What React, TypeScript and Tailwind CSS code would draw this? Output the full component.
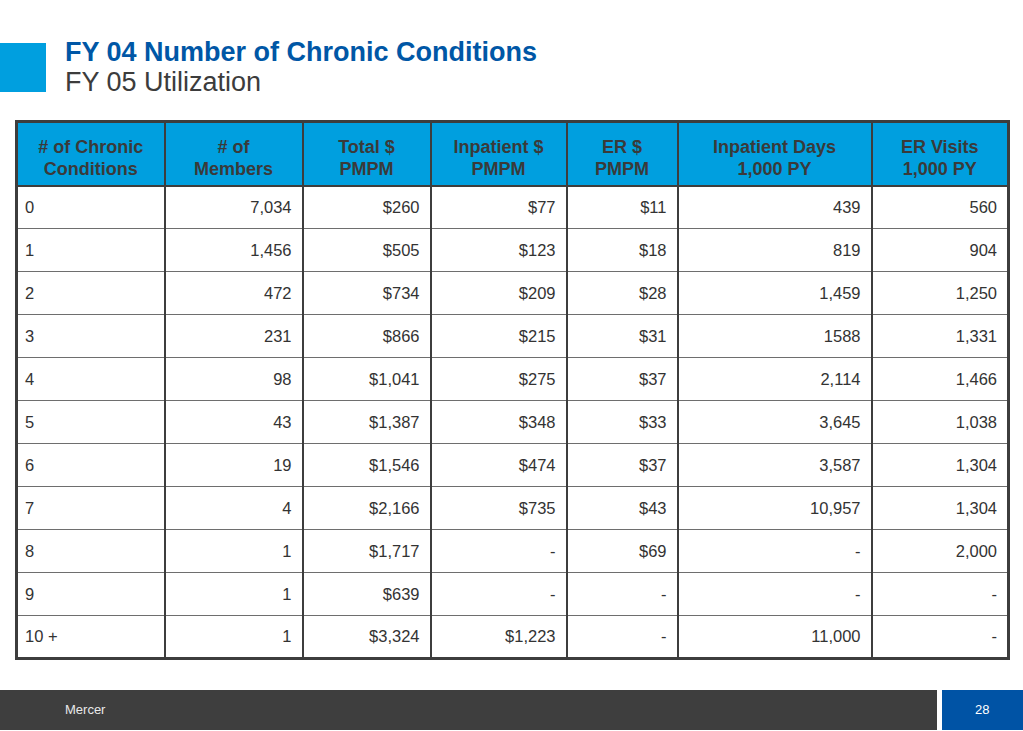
import React from 'react';

const headers = [
  ['# of Chronic', 'Conditions'],
  ['# of', 'Members'],
  ['Total $', 'PMPM'],
  ['Inpatient $', 'PMPM'],
  ['ER $', 'PMPM'],
  ['Inpatient Days', '1,000 PY'],
  ['ER Visits', '1,000 PY'],
];

const widths = [148, 138, 128, 136, 111, 194, 137];

const rows = [
  ['0', '7,034', '$260', '$77', '$11', '439', '560'],
  ['1', '1,456', '$505', '$123', '$18', '819', '904'],
  ['2', '472', '$734', '$209', '$28', '1,459', '1,250'],
  ['3', '231', '$866', '$215', '$31', '1588', '1,331'],
  ['4', '98', '$1,041', '$275', '$37', '2,114', '1,466'],
  ['5', '43', '$1,387', '$348', '$33', '3,645', '1,038'],
  ['6', '19', '$1,546', '$474', '$37', '3,587', '1,304'],
  ['7', '4', '$2,166', '$735', '$43', '10,957', '1,304'],
  ['8', '1', '$1,717', '-', '$69', '-', '2,000'],
  ['9', '1', '$639', '-', '-', '-', '-'],
  ['10 +', '1', '$3,324', '$1,223', '-', '11,000', '-'],
];

const App = () => {
  return (
    <div
      className="w-[1023px] h-[731px] bg-white flex flex-col overflow-hidden"
      style={{ fontFamily: '"Liberation Sans", Arial, sans-serif' }}
    >
      {/* title */}
      <div className="flex items-start h-[120px] pt-[43px]">
        <div className="w-[46px] h-[49px] bg-[#009fdf]" />
        <div className="ml-[19px] -mt-[6px] text-[27px] leading-[30px]">
          <div className="font-bold text-[#0057a6]">FY 04 Number of Chronic Conditions</div>
          <div className="text-[#3c3c3c]">FY 05 Utilization</div>
        </div>
      </div>

      {/* table */}
      <div className="ml-[15px] w-[992px]">
        <table className="table-fixed w-full border-collapse border-[3px] border-[#3d3d3d]">
          <colgroup>
            {widths.map((w, i) => (
              <col key={i} style={{ width: w }} />
            ))}
          </colgroup>
          <thead>
            <tr className="h-[64px] bg-[#009fdf]">
              {headers.map((h, i) => (
                <th
                  key={i}
                  className="border-x-2 border-b-2 border-[#3d3d3d] text-center font-bold text-[18px] leading-[22px] text-[#3a3a3a] pt-[8px]"
                >
                  {h[0]}
                  <br />
                  {h[1]}
                </th>
              ))}
            </tr>
          </thead>
          <tbody>
            {rows.map((r, ri) => (
              <tr key={ri} className="h-[43px] border-b border-[#6e6e6e]">
                {r.map((c, ci) => (
                  <td
                    key={ci}
                    className={`border-x-2 border-[#3d3d3d] text-[16.5px] text-[#333333] ${
                      ci === 0 ? 'text-left pl-[7px]' : 'text-right pr-[10px]'
                    }`}
                  >
                    {c}
                  </td>
                ))}
              </tr>
            ))}
          </tbody>
        </table>
      </div>

      {/* footer */}
      <div className="mt-auto mb-[1px] flex h-[40px]">
        <div className="w-[937px] bg-[#3e3e3e] flex items-center pl-[65px] text-[13px] text-[#e8e8e8]">
          Mercer
        </div>
        <div className="ml-[5px] flex-1 bg-[#0053a5] flex items-center pl-[33px] text-[13px] text-white">
          28
        </div>
      </div>
    </div>
  );
};

export default App;
